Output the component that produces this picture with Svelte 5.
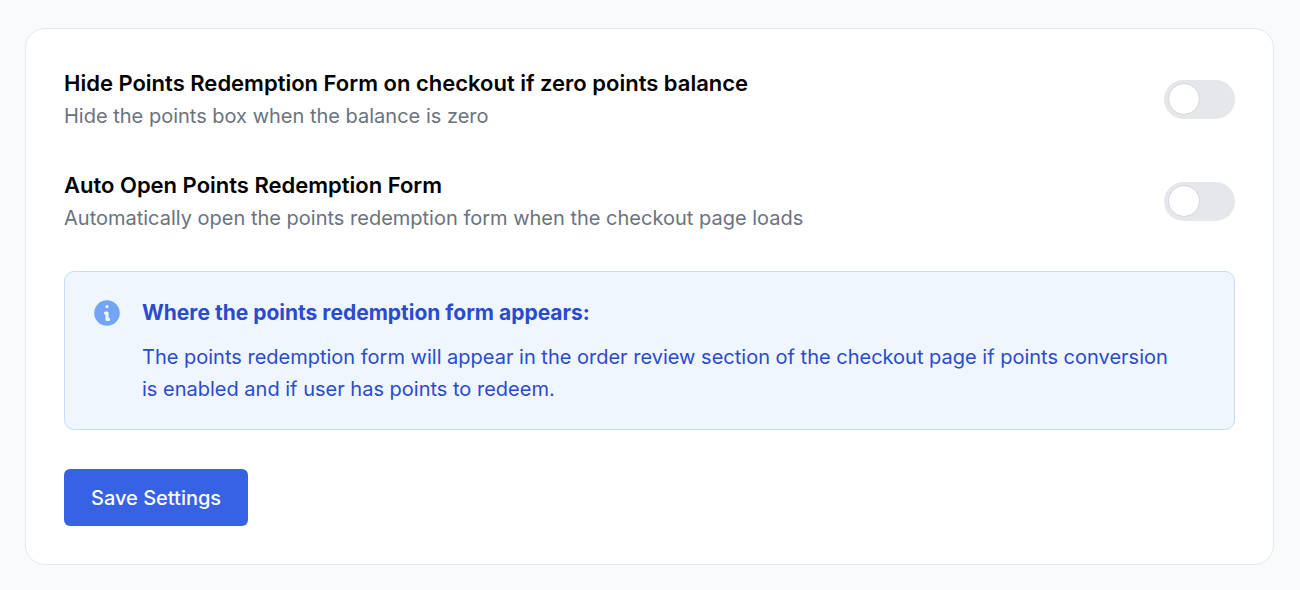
<script>
    let settings = $state([
        {
            id: "hide-zero-balance",
            title: "Hide Points Redemption Form on checkout if zero points balance",
            description: "Hide the points box when the balance is zero",
            enabled: false,
        },
        {
            id: "auto-open-form",
            title: "Auto Open Points Redemption Form",
            description: "Automatically open the points redemption form when the checkout page loads",
            enabled: false,
        },
    ]);

    const save = (event) => {
        event.preventDefault();
    };
</script>

<form class="card" onsubmit={save}>
    {#each settings as setting (setting.id)}
        <div class="setting">
            <div class="text">
                <label for={setting.id}>{setting.title}</label>
                <p id="{setting.id}-hint">{setting.description}</p>
            </div>
            <input
                id={setting.id}
                class="toggle"
                type="checkbox"
                role="switch"
                aria-describedby="{setting.id}-hint"
                bind:checked={setting.enabled}
            />
        </div>
    {/each}

    <div class="notice">
        <svg viewBox="0 0 20 20" aria-hidden="true">
            <path
                fill-rule="evenodd"
                clip-rule="evenodd"
                d="M18 10a8 8 0 11-16 0 8 8 0 0116 0zm-7-4a1 1 0 11-2 0 1 1 0 012 0zM9 9a1 1 0 000 2v3a1 1 0 001 1h1a1 1 0 100-2v-3a1 1 0 00-1-1H9z"
            />
        </svg>
        <div>
            <h3>Where the points redemption form appears:</h3>
            <p>
                The points redemption form will appear in the order review section of the checkout
                page if points conversion is enabled and if user has points to redeem.
            </p>
        </div>
    </div>

    <button type="submit">Save Settings</button>
</form>

<style>
    :global(body) {
        background: #f9fafc;
        font-family: Inter, "Liberation Sans", sans-serif;
    }

    .card {
        margin: 28px 26px 25px 25px;
        padding: 38px;
        border: 1px solid #e5e7eb;
        border-radius: 20px;
        background: #fff;
        font-size: 20px;
        line-height: 32px;
    }

    .setting {
        display: flex;
        align-items: center;
        justify-content: space-between;
        gap: 24px;
        margin-bottom: 37px;
    }

    label {
        font-size: 22px;
        font-weight: 600;
        color: #000;
    }

    p {
        margin: 0;
    }

    .text p {
        color: #6b7280;
    }

    .toggle {
        appearance: none;
        flex: none;
        width: 71px;
        height: 39px;
        margin: 0;
        padding: 3px 4px;
        border-radius: 20px;
        background: #e5e7eb;
        cursor: pointer;
    }

    .toggle::before {
        content: "";
        display: block;
        box-sizing: border-box;
        width: 32px;
        height: 32px;
        border: 1px solid #d1d5db;
        border-radius: 50%;
        background: #fff;
        transition: transform 0.2s;
    }

    .toggle:checked {
        background: #3762e3;
    }

    .toggle:checked::before {
        transform: translateX(31px);
    }

    .notice {
        display: flex;
        gap: 19px;
        padding: 25px 56px 24px 26px;
        border: 1px solid #c3dcf9;
        border-radius: 10px;
        background: #eff6ff;
        color: #2a4bcd;
    }

    .notice svg {
        flex: none;
        width: 32px;
        height: 32px;
        fill: #74a4f5;
    }

    h3 {
        margin: 0 0 12px;
        font-size: 21px;
        font-weight: 700;
    }

    button {
        margin-top: 39px;
        padding: 13px 27px 12px;
        border: 0;
        border-radius: 6px;
        background: #3762e3;
        color: #fff;
        font: inherit;
        font-weight: 500;
        cursor: pointer;
    }
</style>
